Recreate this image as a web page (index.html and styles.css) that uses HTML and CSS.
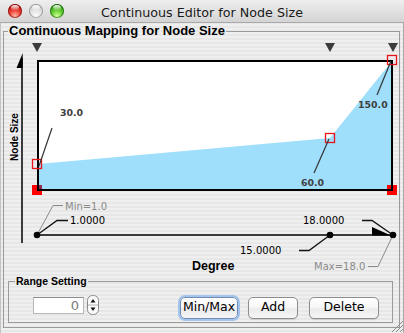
FILE: index.html
```html
<!DOCTYPE html>
<html>
<head>
<meta charset="utf-8">
<title>Continuous Editor for Node Size</title>
<link rel="stylesheet" href="styles.css">
</head>
<body>
<div class="window">
  <header class="titlebar">
    <div class="lights">
      <span class="light red"></span>
      <span class="light gray"></span>
      <span class="light green"></span>
    </div>
    <div class="title">Continuous Editor for Node Size</div>
    <div></div>
  </header>
  <fieldset class="mapping">
    <legend>Continuous Mapping for Node Size</legend>
    <svg class="chart" width="395" height="237" viewBox="4 38 395 237">
      <g fill="#3c3c3c">
        <polygon points="32,43 42,43 37,52"/>
        <polygon points="325,43 335,43 330,52"/>
        <polygon points="388,43 398,43 393,52"/>
      </g>
      <rect x="38" y="61" width="354" height="129" fill="#ffffff"/>
      <polygon points="38,164 330,138 392,61 392,190 38,190" fill="#9fdffb"/>
      <rect x="32" y="185" width="10" height="10" fill="#ff0000"/>
      <rect x="38" y="185" width="4" height="4" fill="#8d2a4c"/>
      <rect x="387" y="185" width="10" height="10" fill="#ff0000"/>
      <rect x="38" y="61" width="354" height="129" fill="none" stroke="#000" stroke-width="2"/>
      <g fill="none" stroke="#e8141c" stroke-width="1.3">
        <rect x="32.5" y="159.5" width="9" height="9"/>
        <rect x="325.5" y="133.5" width="9" height="9"/>
        <rect x="387.5" y="55.5" width="9" height="9"/>
      </g>
      <g stroke="#333" stroke-width="1.2">
        <line x1="52" y1="128" x2="39" y2="166"/>
        <line x1="314" y1="173" x2="329" y2="139"/>
        <line x1="377" y1="95" x2="391" y2="61"/>
      </g>
      <text class="val" x="60" y="116">30.0</text>
      <text class="val" x="301" y="186">60.0</text>
      <text class="val" x="358" y="108">150.0</text>

      <line x1="22" y1="58" x2="22" y2="243" stroke="#000" stroke-width="1.5"/>
      <polygon points="22.7,53 22.7,68 16.5,68" fill="#000"/>
      <text class="axis-side" transform="translate(17.5,137) rotate(-90)" text-anchor="middle">Node Size</text>

      <line x1="37" y1="235" x2="393" y2="235" stroke="#000" stroke-width="1.5"/>
      <polygon points="372,227 372,235.5 391,235.5" fill="#000"/>
      <g fill="none" stroke-width="1">
        <polyline points="37,235 53,205.5 63,205.5" stroke="#8a8a8a"/>
        <polyline points="37,235 57,220.5 68,220.5" stroke="#111" stroke-width="1.3"/>
        <polyline points="362,220.5 372,220.5 393,235" stroke="#111" stroke-width="1.3"/>
        <polyline points="299,250.5 309,250.5 330,235" stroke="#111" stroke-width="1.3"/>
        <polyline points="368,266.5 378,266.5 393,235" stroke="#8a8a8a"/>
      </g>
      <g fill="#000">
        <circle cx="37" cy="235" r="3.3"/>
        <circle cx="330" cy="235" r="3.3"/>
        <circle cx="393" cy="235" r="3.3"/>
      </g>
      <text class="lim" x="65" y="210">Min=1.0</text>
      <text class="ax" x="70" y="224">1.0000</text>
      <text class="ax" x="303" y="224">18.0000</text>
      <text class="ax" x="240" y="254">15.0000</text>
      <text class="lim" x="314" y="270">Max=18.0</text>
      <text class="axis-title" x="192" y="270">Degree</text>
    </svg>
    <fieldset class="range">
      <legend>Range Setting</legend>
      <div class="range-row">
        <div class="field">0</div>
        <svg class="stepper" width="12" height="20" viewBox="0 0 12 20">
          <rect x="0.5" y="0.5" width="11" height="19" rx="5" fill="#fbfbfb" stroke="#8a8a8a"/>
          <line x1="1" y1="10" x2="11" y2="10" stroke="#b0b0b0"/>
          <polygon points="6,4 8.5,7.5 3.5,7.5" fill="#111"/>
          <polygon points="6,16 8.5,12.5 3.5,12.5" fill="#111"/>
        </svg>
        <button class="btn btn-minmax">Min/Max</button>
        <button class="btn btn-add">Add</button>
        <button class="btn btn-delete">Delete</button>
      </div>
    </fieldset>
  </fieldset>
  <svg class="grip" width="12" height="12" viewBox="0 0 12 12">
    <g stroke="#8e8e8e" stroke-width="1">
      <line x1="12" y1="1" x2="1" y2="12"/>
      <line x1="12" y1="5" x2="5" y2="12"/>
      <line x1="12" y1="9" x2="9" y2="12"/>
    </g>
  </svg>
</div>
</body>
</html>
```

FILE: styles.css
```css
* {
  box-sizing: border-box;
}

html,
body {
  margin: 0;
  padding: 0;
}

body {
  width: 404px;
  height: 333px;
  overflow: hidden;
  background: #e8e8e8;
  font-family: "DejaVu Sans", sans-serif;
}

.window {
  position: relative;
  width: 404px;
  height: 333px;
  background: repeating-linear-gradient(to bottom, #efefef 0 2px, #e7e7e7 2px 4px);
  box-shadow: inset 1px 0 #c4c4c4, inset -1px 0 #a9a9a9;
}

.titlebar {
  height: 23px;
  display: grid;
  grid-template-columns: 1fr auto 1fr;
  align-items: start;
  background: linear-gradient(#eeeeee, #d4d4d4);
  border-bottom: 1px solid #a9a9a9;
}

.lights {
  display: flex;
  gap: 7px;
  padding: 4px 0 0 8px;
}

.light {
  position: relative;
  width: 14px;
  height: 14px;
  border-radius: 50%;
}

.light::after {
  content: "";
  position: absolute;
  left: 3px;
  top: 1px;
  width: 8px;
  height: 5px;
  border-radius: 50%;
  background: linear-gradient(rgba(255, 255, 255, 0.95), rgba(255, 255, 255, 0.15));
}

.red {
  background: radial-gradient(circle at 50% 85%, #ffb8a8 0%, #f0493d 38%, #c41b12 72%, #9a0d08 100%);
  box-shadow: inset 0 0 0 1px rgba(110, 0, 0, 0.55);
}

.gray {
  background: radial-gradient(circle at 50% 85%, #fcfcfc 0%, #e2e2e2 45%, #c2c2c2 100%);
  box-shadow: inset 0 0 0 1px rgba(0, 0, 0, 0.28);
}

.green {
  background: radial-gradient(circle at 50% 85%, #d4ff9a 0%, #6fd23a 38%, #35a012 72%, #1f7806 100%);
  box-shadow: inset 0 0 0 1px rgba(0, 70, 0, 0.5);
}

.title {
  padding-top: 4px;
  font: 12.7px/18px "DejaVu Sans", sans-serif;
  color: #1a1a1a;
  white-space: nowrap;
}

.mapping {
  margin: 1px 4px 0 3px;
  padding: 0;
  min-width: 0;
  border: 1px solid #9a9a9a;
}

.mapping > legend {
  margin-left: 4px;
  padding: 0 1px;
  font: bold 13px/14px "Liberation Sans", Arial, sans-serif;
  color: #000;
}

.chart {
  display: block;
}

.val {
  font: bold 9.4px "DejaVu Sans", sans-serif;
  fill: #404040;
}

.ax {
  font: 10px "DejaVu Sans", sans-serif;
  fill: #000;
}

.lim {
  font: 10px "DejaVu Sans", sans-serif;
  fill: #8a8a8a;
}

.axis-title {
  font: bold 12.5px "Liberation Sans", Arial, sans-serif;
  fill: #000;
}

.axis-side {
  font: bold 10px "Liberation Sans", Arial, sans-serif;
  fill: #000;
}

.range {
  margin: 0 6px 4px 4px;
  padding: 0;
  min-width: 0;
  border: 1px solid #9a9a9a;
}

.range > legend {
  margin-left: 6px;
  padding: 0 1px;
  font: bold 10.5px/12px "Liberation Sans", Arial, sans-serif;
  color: #000;
}

.range-row {
  display: flex;
  align-items: flex-start;
  padding: 8px 0 3px 24px;
}

.field {
  width: 51px;
  height: 17px;
  margin-top: 2px;
  padding-right: 4px;
  background: #ffffff;
  border: 1px solid #b8b8b8;
  border-top-color: #8c8c8c;
  font: 13px/15px "DejaVu Sans", sans-serif;
  color: #7a7a7a;
  text-align: right;
}

.stepper {
  display: block;
  margin-left: 3px;
}

.btn {
  height: 22px;
  margin-top: 2px;
  padding: 0 0 1px;
  font: 12.5px/1 "DejaVu Sans", sans-serif;
  color: #000;
  border: 1px solid #8d8d8d;
  border-radius: 5px;
  background: linear-gradient(#ffffff, #f7f7f7 45%, #ebebeb 55%, #f5f5f5);
  box-shadow: 0 1px 1px rgba(0, 0, 0, 0.12);
}

.btn-minmax {
  width: 58px;
  margin-left: 81px;
  border-color: #6f8db8;
  box-shadow: 0 0 0 2px #a4c4ec;
}

.btn-add {
  width: 50px;
  margin-left: 10px;
}

.btn-delete {
  width: 70px;
  margin-left: 11px;
}

.grip {
  position: absolute;
  right: 1px;
  bottom: 1px;
}
```
